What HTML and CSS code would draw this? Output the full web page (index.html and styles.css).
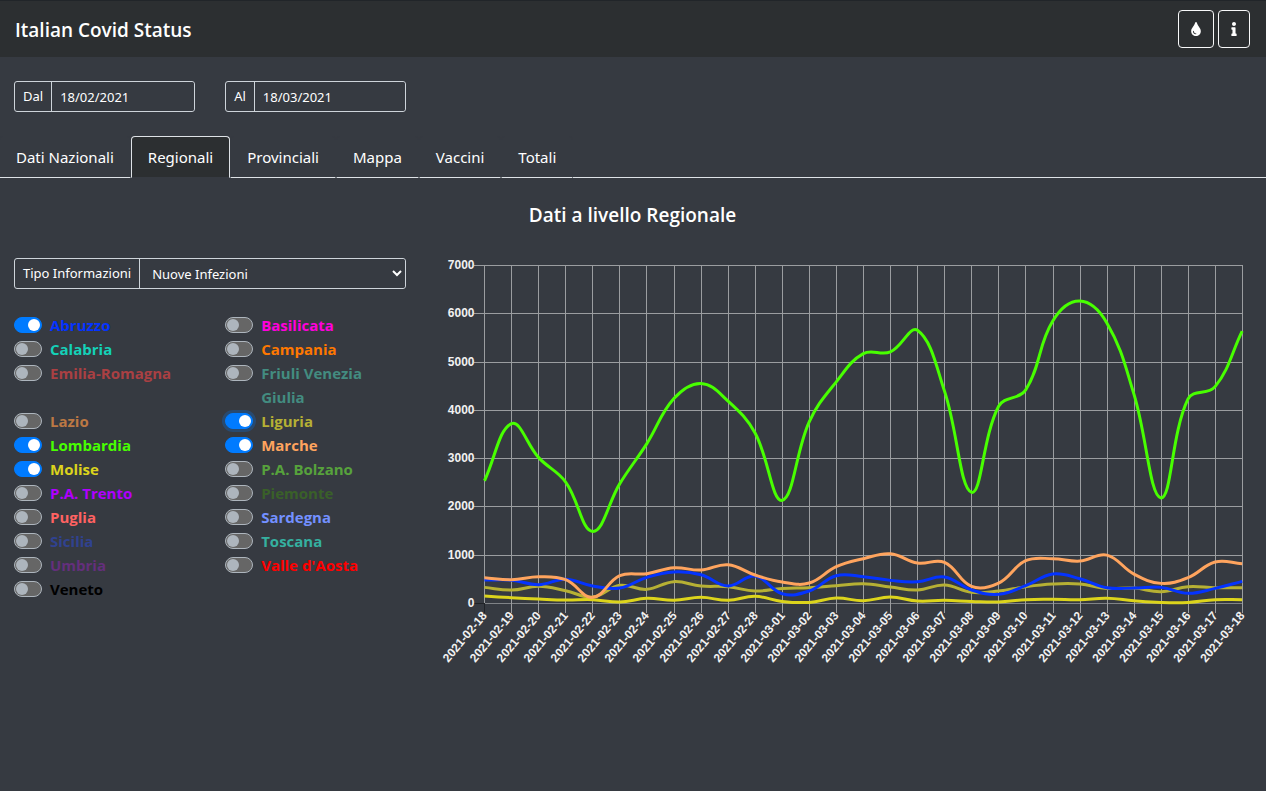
FILE: index.html
```html
<!DOCTYPE html>
<html lang="it">
<head>
<meta charset="utf-8">
<title>Italian Covid Status</title>
<meta name="viewport" content="width=device-width, initial-scale=1">
<link rel="stylesheet" href="styles.css">
</head>
<body>
<header class="topbar">
  <h1 class="brand">Italian Covid Status</h1>
  <div class="actions">
    <button class="icon-btn" type="button" aria-label="Tema"><svg class="icon" width="10" height="14" viewBox="0 0 352 512"><path fill="currentColor" d="M205.22 22.09c-7.94-28.78-49.44-30.12-58.44 0C100.01 179.85 0 222.72 0 333.91 0 432.35 78.72 512 176 512s176-79.65 176-178.09c0-111.75-99.79-153.34-146.78-311.82zM176 448c-61.75 0-112-50.25-112-112 0-8.84 7.16-16 16-16s16 7.16 16 16c0 44.11 35.89 80 80 80 8.84 0 16 7.16 16 16s-7.16 16-16 16z"/></svg></button>
    <button class="icon-btn" type="button" aria-label="Informazioni"><svg class="icon" width="6" height="14" viewBox="0 0 192 512"><path fill="currentColor" d="M20 424.229h20V279.771H20c-11.046 0-20-8.954-20-20V212c0-11.046 8.954-20 20-20h112c11.046 0 20 8.954 20 20v212.229h20c11.046 0 20 8.954 20 20V492c0 11.046-8.954 20-20 20H20c-11.046 0-20-8.954-20-20v-47.771c0-11.046 8.954-20 20-20zM96 0C56.235 0 24 32.235 24 72s32.235 72 72 72 72-32.235 72-72S135.764 0 96 0z"/></svg></button>
  </div>
</header>
<main class="page">
  <form class="dates">
    <div class="group"><label class="group-label" for="from">Dal</label><input class="group-field" id="from" type="text" value="18/02/2021"></div>
    <div class="group"><label class="group-label" for="to">Al</label><input class="group-field" id="to" type="text" value="18/03/2021"></div>
  </form>
  <nav class="tabs">
    <a class="tab" href="#nazionali">Dati Nazionali</a>
    <a class="tab active" href="#regionali" aria-current="page">Regionali</a>
    <a class="tab" href="#provinciali">Provinciali</a>
    <a class="tab" href="#mappa">Mappa</a>
    <a class="tab" href="#vaccini">Vaccini</a>
    <a class="tab" href="#totali">Totali</a>
  </nav>
  <h2 class="section-title">Dati a livello Regionale</h2>
  <div class="content">
    <section class="filters">
      <div class="group"><label class="group-label" for="kind">Tipo Informazioni</label><select class="group-field group-select" id="kind"><option>Nuove Infezioni</option></select></div>
      <div class="regions">
        <label class="region c-abruzzo"><input class="switch" type="checkbox" checked><span>Abruzzo</span></label>
        <label class="region c-basilicata"><input class="switch" type="checkbox"><span>Basilicata</span></label>
        <label class="region c-calabria"><input class="switch" type="checkbox"><span>Calabria</span></label>
        <label class="region c-campania"><input class="switch" type="checkbox"><span>Campania</span></label>
        <label class="region c-emilia"><input class="switch" type="checkbox"><span>Emilia-Romagna</span></label>
        <label class="region c-friuli"><input class="switch" type="checkbox"><span>Friuli Venezia Giulia</span></label>
        <label class="region c-lazio"><input class="switch" type="checkbox"><span>Lazio</span></label>
        <label class="region c-liguria"><input class="switch focused" type="checkbox" checked><span>Liguria</span></label>
        <label class="region c-lombardia"><input class="switch" type="checkbox" checked><span>Lombardia</span></label>
        <label class="region c-marche"><input class="switch" type="checkbox" checked><span>Marche</span></label>
        <label class="region c-molise"><input class="switch" type="checkbox" checked><span>Molise</span></label>
        <label class="region c-bolzano"><input class="switch" type="checkbox"><span>P.A. Bolzano</span></label>
        <label class="region c-trento"><input class="switch" type="checkbox"><span>P.A. Trento</span></label>
        <label class="region c-piemonte"><input class="switch" type="checkbox"><span>Piemonte</span></label>
        <label class="region c-puglia"><input class="switch" type="checkbox"><span>Puglia</span></label>
        <label class="region c-sardegna"><input class="switch" type="checkbox"><span>Sardegna</span></label>
        <label class="region c-sicilia"><input class="switch" type="checkbox"><span>Sicilia</span></label>
        <label class="region c-toscana"><input class="switch" type="checkbox"><span>Toscana</span></label>
        <label class="region c-umbria"><input class="switch" type="checkbox"><span>Umbria</span></label>
        <label class="region c-valle"><input class="switch" type="checkbox"><span>Valle d'Aosta</span></label>
        <label class="region c-veneto"><input class="switch" type="checkbox"><span>Veneto</span></label>
      </div>
    </section>
    <section class="chart-col">
      <svg class="chart" id="chart" viewBox="0 0 814 407" role="img" aria-label="Nuove infezioni per regione"></svg>
    </section>
  </div>
</main>
<script src="chart.js"></script>
</body>
</html>
```
FILE: styles.css
```css
*, *::before, *::after { box-sizing: border-box; }

body {
  margin: 0;
  background: #363a41;
  color: #fff;
  font: 15px/24px "Open Sans", "Noto Sans", sans-serif;
}

.topbar {
  display: flex;
  align-items: center;
  justify-content: space-between;
  padding: 9px 16px 9px 15px;
  background: #2c2f31;
  border-top: 1px solid #212529;
}
.brand { margin: 0; padding-top: 2px; font-size: 19px; line-height: 24px; font-weight: 600; }
.actions { display: flex; gap: 4px; }
.icon-btn {
  display: flex;
  align-items: center;
  height: 38px;
  padding: 0 12px;
  color: #fff;
  background: transparent;
  border: 1px solid #f8f9fa;
  border-radius: 4px;
}
.icon { display: block; }

.page { margin-left: -1px; }

.dates {
  display: grid;
  grid-template-columns: repeat(6, minmax(0, 1fr));
  padding-top: 24px;
}
.dates .group { margin: 0 15px; }
.group {
  display: flex;
  height: 31px;
  border: 1px solid #ced4da;
  border-radius: 3px;
  font-family: "Noto Sans", "Open Sans", sans-serif;
  font-size: 13px;
}
.group-label {
  padding: 0 8px;
  line-height: 29px;
  border-right: 1px solid #ced4da;
  white-space: nowrap;
}
.group-field {
  flex: 1;
  min-width: 0;
  padding: 0 8px;
  border: 0;
  background: #363a41;
  color: #fff;
  font: inherit;
  border-radius: 0 3px 3px 0;
}
.group-select { padding: 0 0 0 8px; }

.tabs {
  display: flex;
  margin-top: 24px;
  border-bottom: 1px solid #dee2e6;
  font-family: "Noto Sans", "Open Sans", sans-serif;
}
.tab {
  margin-bottom: -1px;
  padding: 8px 16px;
  color: #fff;
  text-decoration: none;
  border: 1px solid #363a41;
  border-bottom-color: #dee2e6;
  border-radius: 4px 4px 0 0;
}
.tab.active {
  background: #2c2f31;
  border-color: #dee2e6 #dee2e6 #363a41;
}

.section-title {
  margin: 25px 0 31px;
  text-align: center;
  font-size: 19px;
  line-height: 24px;
  font-weight: 600;
}

.content { display: grid; grid-template-columns: 1fr 2fr; }
.filters, .chart-col { min-width: 0; padding: 0 15px; }
.chart-col { padding-left: 16px; }
.regions {
  display: grid;
  grid-template-columns: 1fr 1fr;
  column-gap: 30px;
  margin-top: 24px;
}
.region {
  display: flex;
  gap: 8px;
  font-weight: 700;
}
.switch {
  appearance: none;
  flex: none;
  width: 28px;
  height: 16px;
  margin: 4px 0;
  padding: 1px;
  border: 1px solid #adb5bd;
  border-radius: 8px;
  background: #666;
}
.switch::before {
  content: "";
  display: block;
  width: 12px;
  height: 12px;
  border-radius: 6px;
  background: #adb5bd;
}
.switch:checked { border-color: #007bff; background: #007bff; }
.switch:checked::before { margin-left: 12px; background: #fff; }
.switch.focused { box-shadow: 0 0 0 3px rgba(0, 123, 255, 0.25); }

.c-abruzzo { color: #0433ff; }
.c-basilicata { color: #ff00dc; }
.c-calabria { color: #14d1b8; }
.c-campania { color: #ff7800; }
.c-emilia { color: #aa4043; }
.c-friuli { color: #438c80; }
.c-lazio { color: #bc7844; }
.c-liguria { color: #b6b034; }
.c-lombardia { color: #48ff00; }
.c-marche { color: #ffa45e; }
.c-molise { color: #dcd41c; }
.c-bolzano { color: #57a23c; }
.c-trento { color: #b000ff; }
.c-piemonte { color: #3a6029; }
.c-puglia { color: #ff6262; }
.c-sardegna { color: #7390ff; }
.c-sicilia { color: #304290; }
.c-toscana { color: #35b0a0; }
.c-umbria { color: #642f7c; }
.c-valle { color: #ff0000; }
.c-veneto { color: #000; }

.chart { display: block; width: 100%; height: auto; }
.grid { stroke: #9b9da0; stroke-width: 1; shape-rendering: crispEdges; }
.zero { stroke: #808387; }
.zero-tick { stroke: #202327; }
.axis-text { fill: #f1f1f1; font: bold 12px "Liberation Sans", Arial, sans-serif; text-anchor: end; }
.series { fill: none; stroke: currentColor; stroke-width: 3; }
```
FILE: chart.js
```js
const NS = "http://www.w3.org/2000/svg";
const svg = document.getElementById("chart");
const area = { left: 47.5, right: 805.5, top: 7.5, bottom: 345.5 };
const MAX = 7000;

// Listed from the bottom layer to the top one.
const series = {
  liguria: [331,276,352,262,131,373,290,450,359,345,255,310,324,366,407,338,276,380,228,255,345,400,400,310,317,241,345,324,324],
  molise: [150,117,90,69,76,28,104,62,124,62,145,40,20,110,55,131,48,62,40,28,76,83,76,104,55,20,20,76,76],
  abruzzo: [483,480,386,500,359,317,538,650,593,359,566,200,255,573,552,476,448,545,276,186,366,607,510,324,317,331,207,310,455],
  lombardia: [2540,3724,3019,2514,1491,2480,3310,4243,4557,4191,3529,2135,3762,4590,5174,5210,5658,4397,2301,4084,4422,5849,6262,5809,4334,2185,4235,4490,5641],
  marche: [531,490,552,490,124,573,614,738,690,800,587,442,421,759,925,1028,835,849,352,421,883,925,876,1000,607,414,531,856,821]
};
const count = series.liguria.length;
const start = Date.UTC(2021, 1, 18);
const xAt = i => area.left + i * (area.right - area.left) / (count - 1);
const yAt = v => area.bottom - v * (area.bottom - area.top) / MAX;
const crisp = v => Math.floor(v) + 0.5;

function add(name, attrs, text) {
  const el = document.createElementNS(NS, name);
  for (const key in attrs) el.setAttribute(key, attrs[key]);
  if (text !== undefined) el.textContent = text;
  svg.appendChild(el);
}

for (let v = 0; v <= MAX; v += 1000) {
  const y = crisp(yAt(v));
  add("line", { class: v ? "grid" : "grid zero", x1: area.left, x2: area.right, y1: y, y2: y });
  add("line", { class: v ? "grid" : "grid zero-tick", x1: area.left - 10, x2: area.left, y1: y, y2: y });
  add("text", { class: "axis-text", x: area.left - 10, y: y + 4 }, v);
}
for (let i = 0; i < count; i++) {
  const x = crisp(xAt(i));
  add("line", { class: "grid", x1: x, x2: x, y1: area.top, y2: area.bottom });
  add("line", { class: i ? "grid" : "grid zero-tick", x1: x, x2: x, y1: area.bottom, y2: area.bottom + 10 });
  const label = new Date(start + i * 864e5).toISOString().slice(0, 10);
  add("text", { class: "axis-text", transform: `translate(${x} ${area.bottom + 10}) rotate(-50)`, x: 0, y: 4 }, label);
}

// Cubic spline whose handles follow the chord between neighbouring points.
function spline(values) {
  const p = values.map((v, i) => ({ x: xAt(i), y: yAt(v) }));
  const clamp = y => Math.min(area.bottom, Math.max(area.top, y));
  const handles = p.map((c, i) => {
    const a = p[i - 1] || c, b = p[i + 1] || c;
    const d0 = Math.hypot(c.x - a.x, c.y - a.y), d1 = Math.hypot(b.x - c.x, b.y - c.y);
    const f0 = 0.4 * d0 / (d0 + d1), f1 = 0.4 * d1 / (d0 + d1);
    return {
      inX: c.x - f0 * (b.x - a.x), inY: clamp(c.y - f0 * (b.y - a.y)),
      outX: c.x + f1 * (b.x - a.x), outY: clamp(c.y + f1 * (b.y - a.y))
    };
  });
  let d = `M${p[0].x} ${p[0].y}`;
  for (let i = 1; i < p.length; i++) {
    d += `C${handles[i - 1].outX} ${handles[i - 1].outY} ${handles[i].inX} ${handles[i].inY} ${p[i].x} ${p[i].y}`;
  }
  return d;
}
for (const name in series) add("path", { class: "series c-" + name, d: spline(series[name]) });
```
